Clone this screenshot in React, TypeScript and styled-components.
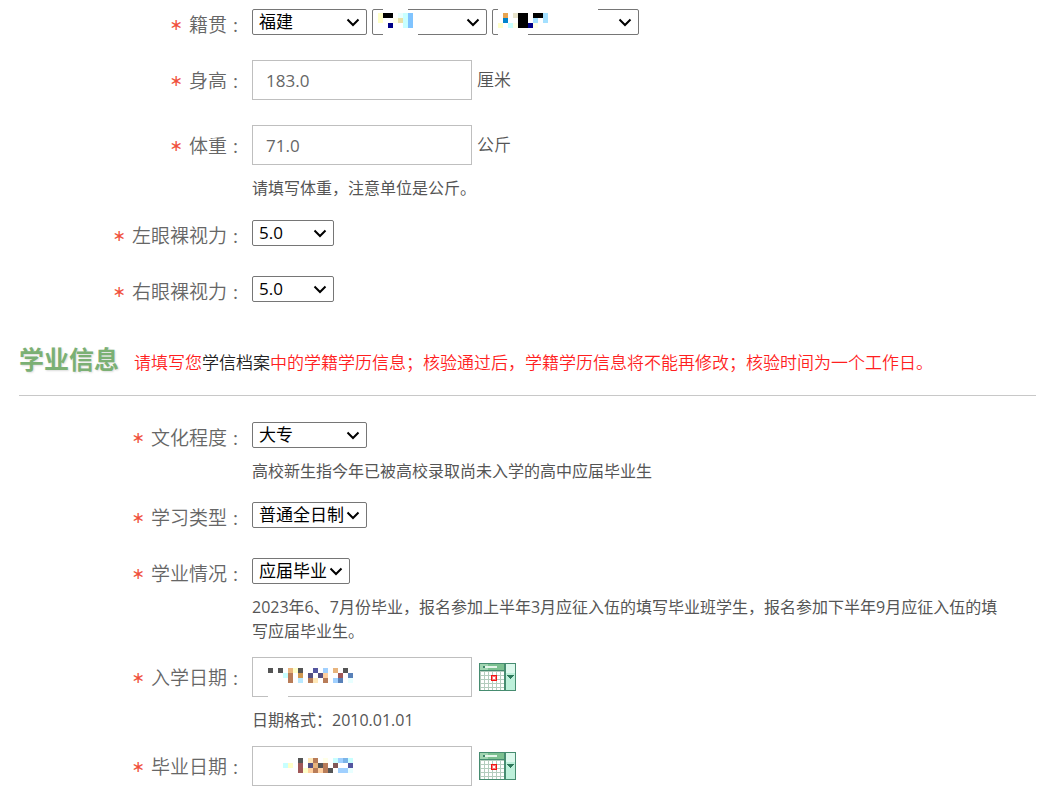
import React from 'react';
import styled, { createGlobalStyle } from 'styled-components';

const GlobalStyle = createGlobalStyle`
  *, *::before, *::after { box-sizing: border-box; }
  body {
    margin: 0;
    background: #fff;
    color: #444;
    font-family: 'Open Sans', 'Noto Sans CJK SC', sans-serif;
    font-size: 16px;
  }
`;

const Form = styled.form`
  padding: 9px 9px 8px 19px;
`;

const Row = styled.div<{ $after?: number }>`
  display: grid;
  grid-template-columns: 221px minmax(0, 1fr);
  column-gap: 12px;
  align-items: start;
  margin-bottom: ${({ $after = 0 }) => $after}px;
`;

const Label = styled.label<{ $tall?: boolean }>`
  display: flex;
  justify-content: flex-end;
  font-size: 19px;
  font-weight: 350;
  line-height: ${({ $tall }) => ($tall ? 42 : 32)}px;
  color: #666;
`;

const Star = styled.span`
  margin-right: 6px;
  font-family: 'DejaVu Sans', sans-serif;
  font-size: 16px;
  font-weight: 400;
  color: #f0503c;
`;

const Colon = styled.span`
  width: 13px;
  padding-left: 6px;
  font-weight: 400;
`;

const Controls = styled.div`
  display: flex;
  align-items: center;
  gap: 5px;
`;

const Holder = styled.div`
  position: relative;
  display: flex;
`;

const SelectBox = styled.select<{ $width: number }>`
  appearance: none;
  width: ${({ $width }) => $width}px;
  height: 26px;
  padding: 0 0 0 6px;
  border: 1px solid #767676;
  border-radius: 2px;
  background: #fff;
  color: #000;
  font: inherit;
  font-size: 17px;
  line-height: 24px;
`;

const Chevron = styled.svg`
  position: absolute;
  top: 9px;
  right: 7px;
  pointer-events: none;
`;

const TextBox = styled.input`
  width: 220px;
  height: 40px;
  padding: 0 13px;
  border: 1px solid #bfbfbf;
  background: #fff;
  color: #666;
  font: inherit;
  font-size: 17px;
`;

const Unit = styled.span`
  padding-bottom: 3px;
  font-size: 17px;
  font-weight: 350;
  color: #555;
`;

const Hint = styled.p`
  margin: 11px 0 0;
  max-width: 760px;
  line-height: 24px;
  color: #555;
`;

const CalendarButton = styled.button`
  display: block;
  margin-left: 2px;
  padding: 0;
  border: 0;
  background: none;
  line-height: 0;
`;

const SectionHead = styled.header`
  display: flex;
  align-items: baseline;
  gap: 15px;
  height: 88px;
  padding-top: 33px;
  margin-bottom: 26px;
  border-bottom: 1px solid #c8c8c8;
`;

const Title = styled.h2`
  margin: 0;
  font-size: 25px;
  line-height: 36px;
  font-weight: 700;
  color: #7bb074;
  text-shadow: 1px 1px 2px #ddd;
`;

const Notice = styled.p`
  margin: 0;
  font-size: 17px;
  font-weight: 350;
  color: #ff1f1f;
`;

const Link = styled.a`
  color: #222;
  text-decoration: none;
`;

const MaskSvg = styled.svg`
  position: absolute;
  top: 0;
  left: 0;
  pointer-events: none;
`;

const palette: Record<string, string> = {
  K: '#000000', N: '#000088', y: '#ffffc8', w: '#ffffe8', c: '#c8ffff', e: '#e8ffff',
  b: '#80c4ff', s: '#a4e0ff', t: '#e8e4cc', k: '#e8e0a8', o: '#e8a450', B: '#0084cc',
  g: '#555555', O: '#e8b47c', I: '#5456a0', a: '#a0d0ff', n: '#b87c58', d: '#d09850',
  v: '#555080', p: '#ffd0a0', r: '#a05858', u: '#5880b8', h: '#b8e8ff', f: '#ffe8b8',
  l: '#7cb4e8', m: '#805858',
};

type Patch = [number, number, number, number];
interface MaskProps { width: number; height: number; x: number; y: number; rows: string[]; blanks?: Patch[] }

function Mask({ width, height, x, y, rows, blanks = [] }: MaskProps) {
  return (
    <MaskSvg width={width} height={height} shapeRendering="crispEdges" aria-hidden="true">
      {blanks.map(([bx, by, bw, bh]) => (
        <rect key={`${bx}-${by}`} x={bx} y={by} width={bw} height={bh} fill="#fff" />
      ))}
      {rows.flatMap((line, r) =>
        [...line].map((cell, c) =>
          palette[cell] ? (
            <rect key={`${r}-${c}`} x={x + c * 5} y={y + r * 5} width="5" height="5" fill={palette[cell]} />
          ) : null,
        ),
      )}
    </MaskSvg>
  );
}

interface SelectProps { id?: string; width: number; option?: string; name?: string; children?: React.ReactNode }

function Select({ id, width, option, name, children }: SelectProps) {
  return (
    <Holder>
      <SelectBox id={id} $width={width} aria-label={name}>
        <option>{option}</option>
      </SelectBox>
      <Chevron width="14" height="9" aria-hidden="true">
        <path d="M1.5 1.5L7 7L12.5 1.5" fill="none" stroke="#000" strokeWidth="2" />
      </Chevron>
      {children}
    </Holder>
  );
}

function Calendar() {
  return (
    <CalendarButton type="button" aria-label="选择日期">
      <svg width="37" height="28" shapeRendering="crispEdges">
        <rect width="37" height="28" fill="#468c70" />
        <rect x="1" y="1" width="24" height="6" fill="#7cc090" />
        <rect x="1" y="1" width="8" height="6" fill="#a0d4b0" />
        <rect x="4" y="3" width="2" height="2" fill="#3d8468" />
        <rect x="6" y="3" width="12" height="2" fill="#e4f6ea" />
        <rect x="1" y="8" width="24" height="19" fill="#b4ccbe" />
        {[9, 13, 17, 21, 25].map((cy) =>
          [2, 6, 10, 14, 18, 22].map((cx) => (
            <rect key={`${cx}-${cy}`} x={cx} y={cy} width="3" height={cy === 25 ? 2 : 3} fill="#fff" />
          )),
        )}
        <rect x="12" y="12" width="6" height="6" fill="#f01414" />
        <rect x="13" y="13" width="4" height="4" fill="#f87878" />
        <rect x="14" y="14" width="2" height="2" fill="#fff" />
        <rect x="27" y="1" width="9" height="26" fill="#bdf0da" />
        <rect x="27" y="1" width="9" height="9" fill="#dcf8ec" />
        <path d="M28 12h7v1h-1v1h-1v1h-1v1h-1v-1h-1v-1h-1v-1h-1z" fill="#2e7a5c" />
      </svg>
    </CalendarButton>
  );
}

interface FieldProps { id: string; text: string; tall?: boolean; after?: number; hint?: React.ReactNode; children: React.ReactNode }

function Field({ id, text, tall, after, hint, children }: FieldProps) {
  return (
    <Row $after={after}>
      <Label htmlFor={id} $tall={tall}>
        <Star>∗</Star>
        {text}
        <Colon>:</Colon>
      </Label>
      <div>
        <Controls>{children}</Controls>
        {hint && <Hint>{hint}</Hint>}
      </div>
    </Row>
  );
}

export default function App() {
  return (
    <>
      <GlobalStyle />
      <Form>
        <Field id="province" text="籍贯" after={19}>
          <Select id="province" width={115} option="福建" />
          <Select width={115} name="市">
            <Mask width={115} height={26} x={6} y={4}
              rows={['yKK ecb', 'y  wkcb', '  N  cb']}
              blanks={[[11, 0, 25, 2], [11, 24, 35, 2]]} />
          </Select>
          <Select width={147} name="县">
            <Mask width={147} height={26} x={6} y={4}
              rows={[' o tKK KKs', ' B  KK s s', 'y cwKKNw']}
              blanks={[[6, 0, 100, 2], [6, 24, 30, 2]]} />
          </Select>
        </Field>
        <Field id="height" text="身高" tall after={23}>
          <TextBox id="height" defaultValue="183.0" />
          <Unit>厘米</Unit>
        </Field>
        <Field id="weight" text="体重" tall after={20} hint="请填写体重，注意单位是公斤。">
          <TextBox id="weight" defaultValue="71.0" />
          <Unit>公斤</Unit>
        </Field>
        <Field id="left-eye" text="左眼裸视力" after={24}>
          <Select id="left-eye" width={82} option="5.0" />
        </Field>
        <Field id="right-eye" text="右眼裸视力">
          <Select id="right-eye" width={82} option="5.0" />
        </Field>

        <SectionHead>
          <Title>学业信息</Title>
          <Notice>
            请填写您<Link href="#archive">学信档案</Link>中的学籍学历信息；核验通过后，学籍学历信息将不能再修改；核验时间为一个工作日。
          </Notice>
        </SectionHead>

        <Field id="education" text="文化程度" after={19} hint="高校新生指今年已被高校录取尚未入学的高中应届毕业生">
          <Select id="education" width={115} option="大专" />
        </Field>
        <Field id="study-type" text="学习类型" after={24}>
          <Select id="study-type" width={115} option="普通全日制" />
        </Field>
        <Field id="status" text="学业情况" after={14}
          hint="2023年6、7月份毕业，报名参加上半年3月应征入伍的填写毕业班学生，报名参加下半年9月应征入伍的填写应届毕业生。">
          <Select id="status" width={98} option="应届毕业" />
        </Field>
        <Field id="start" text="入学日期" tall after={14} hint="日期格式：2010.01.01">
          <Holder>
            <TextBox id="start" />
            <Mask width={220} height={40} x={16} y={11}
              rows={['g g Oyg  I a O g', '   cn d v vp  r u', '    n h nf n au e']}
              blanks={[[16, 38, 20, 2]]} />
          </Holder>
          <Calendar />
        </Field>
        <Field id="end" text="毕业日期" tall>
          <Holder>
            <TextBox id="end" />
            <Mask width={220} height={40} x={16} y={12}
              rows={['      g fn w calc', '   cy r vOgn m  I', '      rypnpng aae']} />
          </Holder>
          <Calendar />
        </Field>
      </Form>
    </>
  );
}
